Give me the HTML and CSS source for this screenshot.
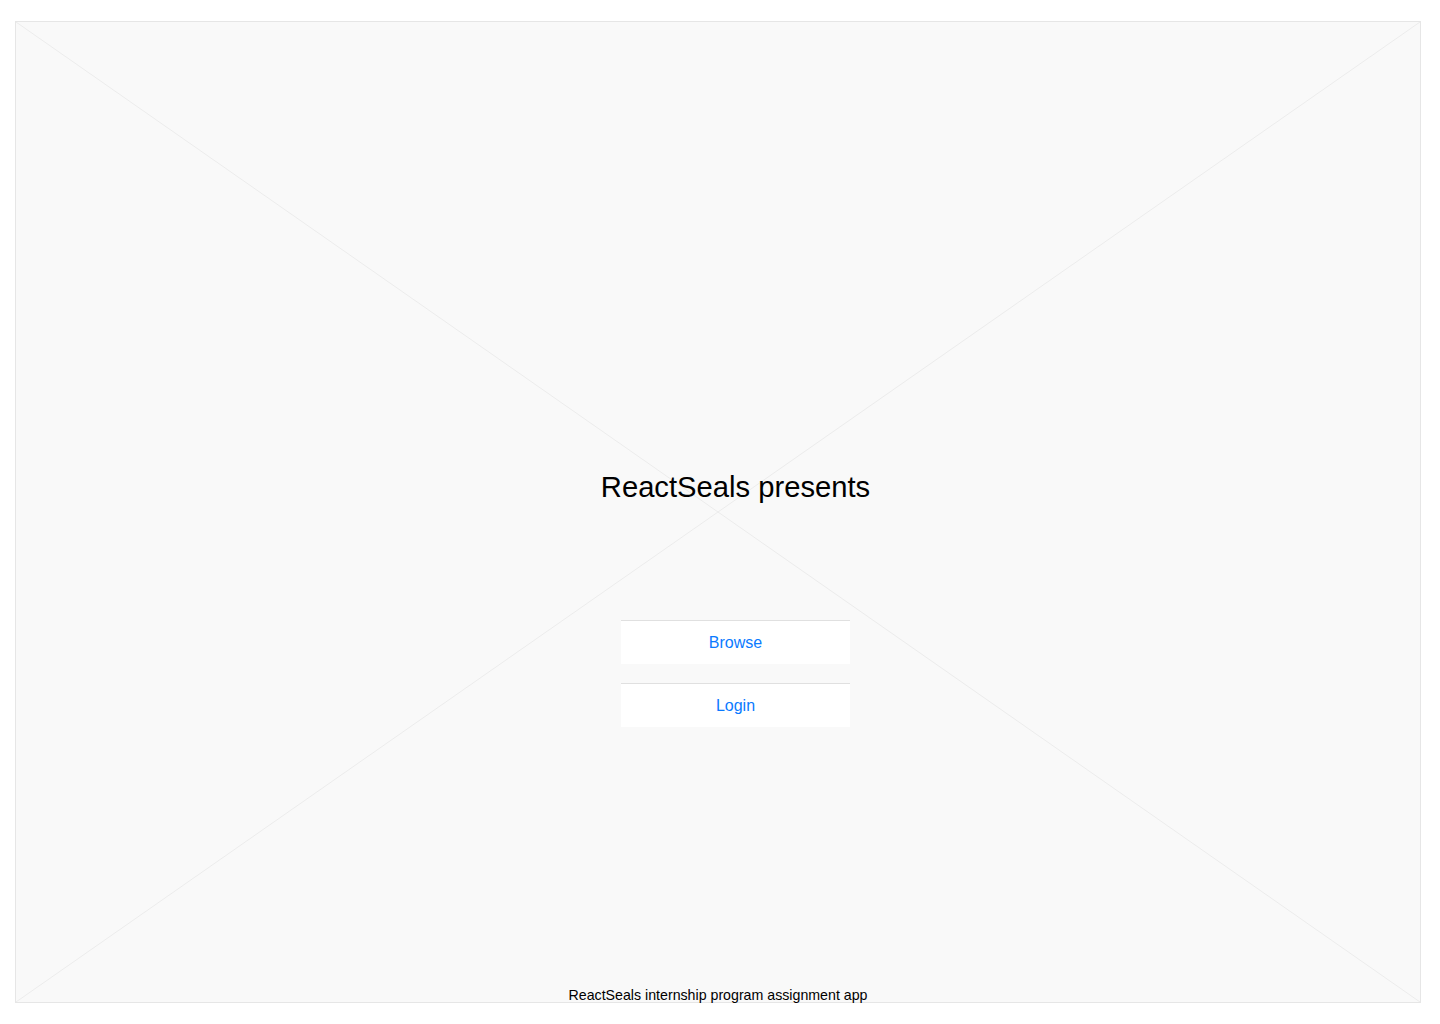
FILE: index.html
```html
<!DOCTYPE html>
<html lang="en">
<head>
<meta charset="utf-8">
<title>ReactSeals</title>
<link rel="stylesheet" href="styles.css">
</head>
<body>
<div class="frame">
  <svg class="cross" viewBox="0 0 100 100" preserveAspectRatio="none" aria-hidden="true">
    <line x1="0" y1="0" x2="100" y2="100" vector-effect="non-scaling-stroke"/>
    <line x1="100" y1="0" x2="0" y2="100" vector-effect="non-scaling-stroke"/>
  </svg>
  <main class="content">
    <h1 class="title">ReactSeals presents</h1>
    <nav class="actions">
      <a class="action" href="#">Browse</a>
      <a class="action" href="#">Login</a>
    </nav>
  </main>
  <footer class="footer">ReactSeals internship program assignment app</footer>
</div>
</body>
</html>
```
FILE: styles.css
```css
html, body {
  margin: 0;
  padding: 0;
  background: #ffffff;
}
body {
  font-family: "Liberation Sans", Arial, sans-serif;
  color: #000;
}
.frame {
  position: relative;
  box-sizing: border-box;
  margin: 21px 19px 0 15px;
  height: 982px;
  border: 1px solid #e6e6e6;
  background: #f9f9f9;
  display: flex;
  flex-direction: column;
}
.cross {
  position: absolute;
  inset: 0;
  width: 100%;
  height: 100%;
  pointer-events: none;
}
.cross line {
  stroke: #ececec;
  stroke-width: 1;
}
.content {
  position: relative;
  flex: 1;
  display: flex;
  flex-direction: column;
  align-items: center;
  padding: 449px 0 0 35px;
}
.title {
  margin: 0;
  font-size: 29.2px;
  line-height: 33px;
  font-weight: normal;
}
.actions {
  margin-top: 116px;
  display: flex;
  flex-direction: column;
  gap: 19px;
}
.action {
  box-sizing: border-box;
  display: flex;
  align-items: center;
  justify-content: center;
  width: 229px;
  height: 44px;
  background: #ffffff;
  border-top: 1px solid #e0e0e0;
  color: #0a7aff;
  font-size: 16px;
  text-decoration: none;
}
.footer {
  position: relative;
  text-align: center;
  font-size: 14.2px;
  line-height: 16px;
  margin-bottom: -1px;
}
```
